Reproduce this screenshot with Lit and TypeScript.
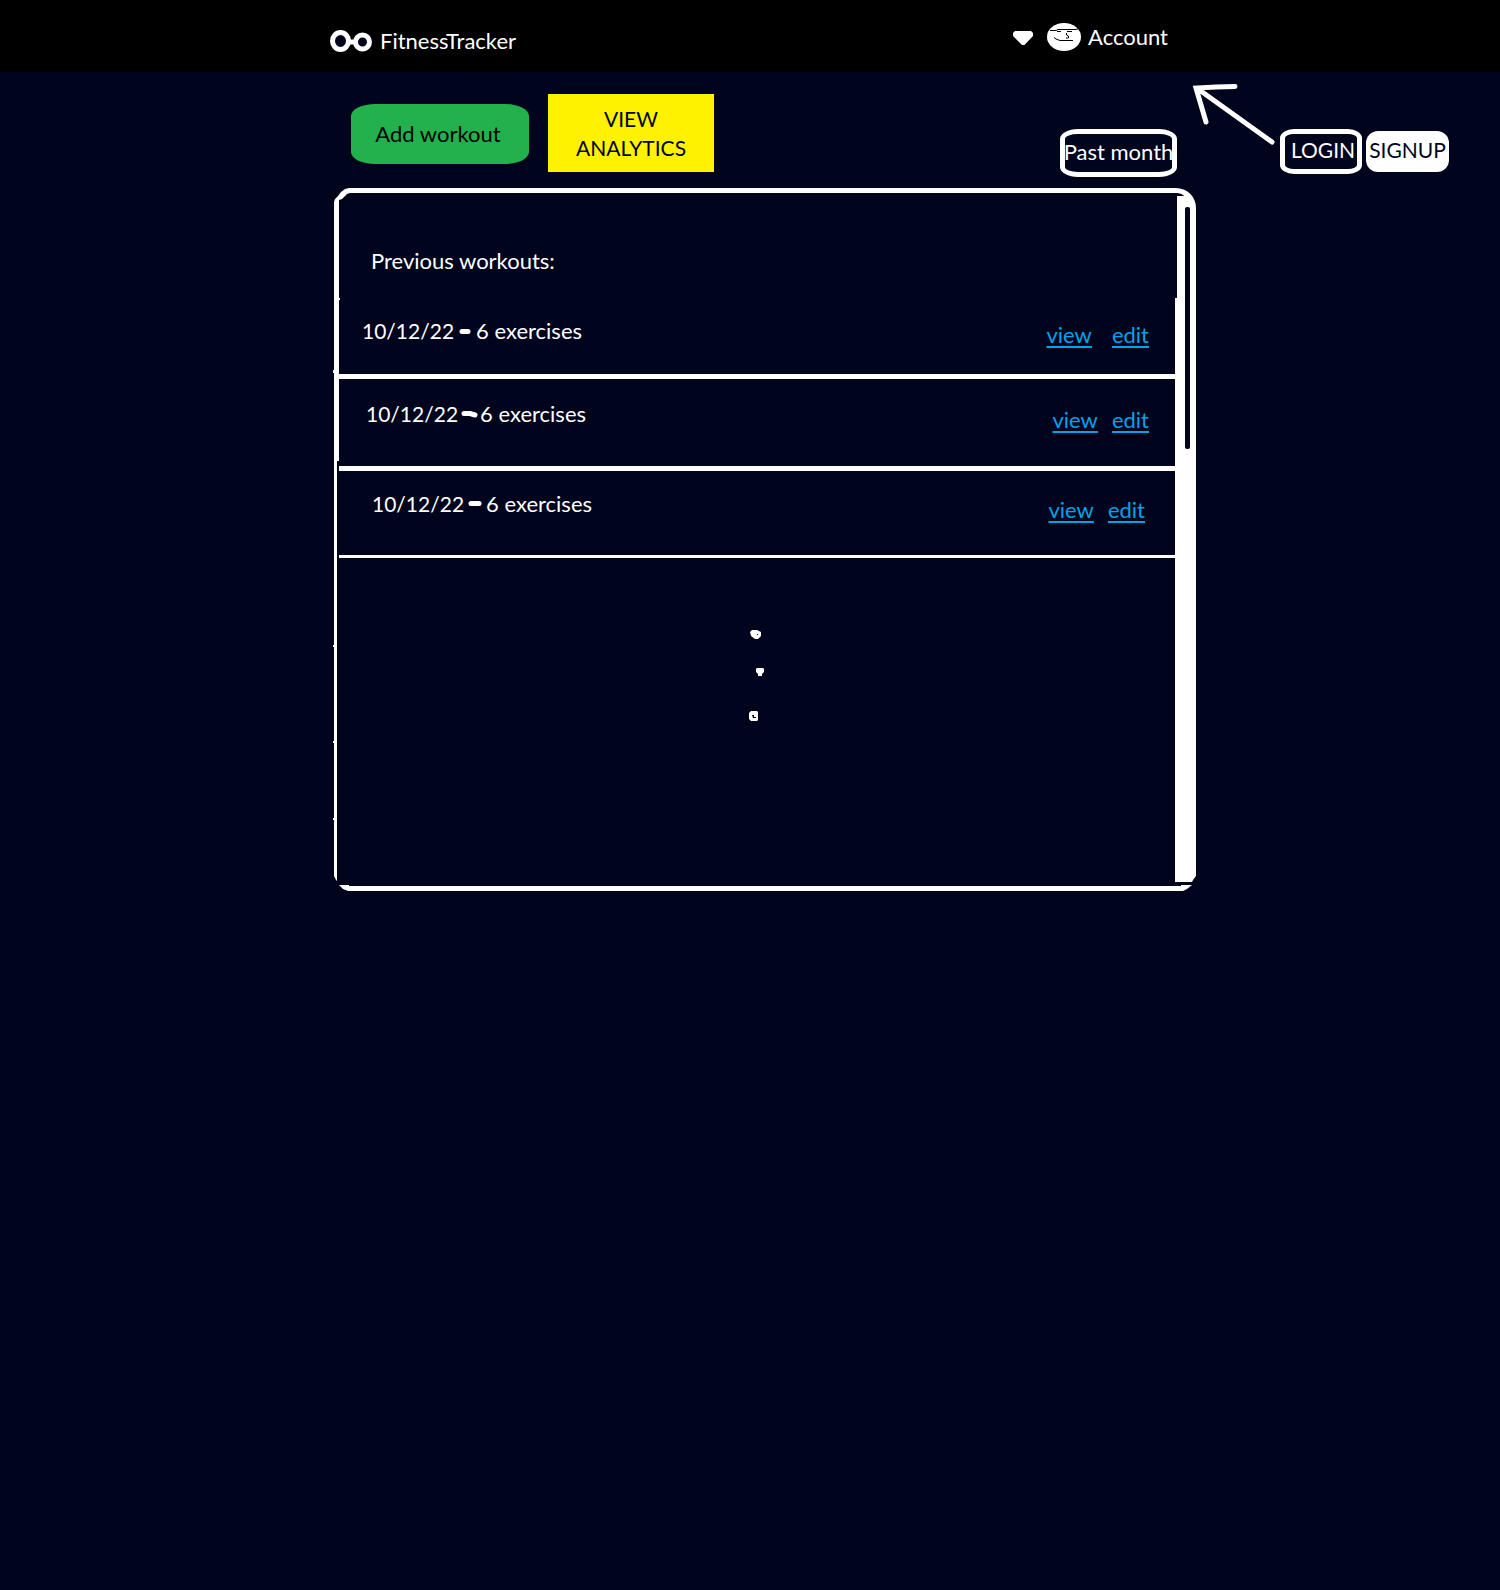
import { LitElement, html, css, svg } from "lit";
import { customElement, property } from "lit/decorators.js";

interface Workout {
  date: string;
  count: number;
  tone: string;
}

const WORKOUTS: Workout[] = [
  { date: "10/12/22", count: 6, tone: "first" },
  { date: "10/12/22", count: 6, tone: "second" },
  { date: "10/12/22", count: 6, tone: "third" },
];

const DASHES: Record<string, string> = {
  first: "M6 4.5H12",
  second: "M4 3.5H10L15 5",
  third: "M5 3.5H13",
};

@customElement("workout-row")
export class WorkoutRow extends LitElement {
  @property({ attribute: false }) workout!: Workout;

  static styles = css`
    :host {
      display: block;
    }
    .row {
      box-sizing: border-box;
      display: flex;
      justify-content: space-between;
      align-items: flex-start;
      margin-left: 2px;
      white-space: nowrap;
    }
    .first {
      height: 81px;
      padding: 18px 26px 0 23px;
      border-bottom: 5px solid #fff;
      box-shadow: -2px 0 0 #fff;
    }
    .second {
      height: 82px;
      padding: 20px 26px 0 27px;
      box-shadow: -2px 0 0 #fff;
    }
    .second-rule {
      height: 5px;
      margin: 5px 0 0 2px;
      background: #fff;
    }
    .third {
      height: 87px;
      padding: 18px 30px 0 33px;
      border-bottom: 3px solid #fff;
    }
    .summary,
    .links {
      display: flex;
    }
    .date {
      font-size: 21px;
    }
    .dash {
      width: 18px;
      height: 8px;
      margin: 11px 2px 0 2px;
      fill: none;
      stroke: #fff;
      stroke-width: 5;
      stroke-linecap: round;
    }
    .links {
      gap: 14px;
      padding-top: 6px;
    }
    .first .links {
      gap: 20px;
      padding-top: 4px;
    }
    a {
      color: #00a2e8;
      text-decoration: underline;
      text-decoration-thickness: 2px;
      text-underline-offset: 3px;
      text-decoration-skip-ink: none;
    }
  `;

  render() {
    const w = this.workout;
    return html`
      <div class="row ${w.tone}">
        <div class="summary">
          <span class="date">${w.date}</span>
          <svg class="dash" viewBox="0 0 18 8" aria-hidden="true">
            <path d=${DASHES[w.tone]}></path>
          </svg>
          <span>${w.count} exercises</span>
        </div>
        <div class="links"><a href="#view">view</a><a href="#edit">edit</a></div>
      </div>
      ${w.tone === "second" ? html`<div class="second-rule"></div>` : null}
    `;
  }
}

@customElement("app-root")
export class AppRoot extends LitElement {
  static styles = css`
    :host {
      display: block;
      min-height: 100vh;
      background: #00041d;
      color: #fff;
      font: 22px/29px Lato, Carlito, Calibri, sans-serif;
    }
    .columns {
      display: grid;
      grid-template-columns: 334fr 862fr 304fr;
    }
    .top {
      background: #000;
      height: 72px;
    }
    .bar {
      grid-column: 2;
      display: flex;
      justify-content: space-between;
      align-items: flex-start;
      white-space: nowrap;
    }
    .brand,
    .account {
      display: flex;
      align-items: center;
      color: inherit;
      text-decoration: none;
      font: inherit;
      background: none;
      border: 0;
      padding: 0;
    }
    .brand {
      margin: 26px 0 0 -4px;
      gap: 7px;
    }
    .account {
      margin: 21px 28px 0 0;
      gap: 7px;
    }
    .brand svg,
    .account svg {
      margin-top: 2px;
    }
    .account .caret {
      margin: 4px 7px 0 0;
    }
    svg {
      display: block;
      flex: none;
    }
    .tools {
      grid-column: 2;
      display: flex;
      align-items: flex-start;
      height: 116px;
      padding: 0 19px 0 17px;
    }
    button {
      box-sizing: border-box;
      font: inherit;
      white-space: nowrap;
      padding: 0;
      border: 0;
      color: inherit;
    }
    .add {
      width: 178px;
      height: 60px;
      margin-top: 32px;
      padding: 0 4px 2px 0;
      border-radius: 24px / 12px;
      background: #22b14c;
      color: #000;
    }
    .analytics,
    .login,
    .signup {
      font-size: 21px;
    }
    .analytics {
      width: 166px;
      height: 78px;
      margin: 22px auto 0 19px;
      background: #fff200;
      color: #00041d;
    }
    .analytics span {
      display: block;
    }
    .period,
    .login {
      display: flex;
      align-items: center;
      justify-content: center;
      border: 5px solid #fff;
      background: none;
    }
    .period {
      width: 117px;
      height: 48px;
      margin-top: 57px;
      padding-bottom: 3px;
      border-radius: 18px / 10px;
    }
    .auth {
      grid-column: 3;
      display: flex;
      align-items: flex-start;
      padding-top: 10px;
    }
    .arrow {
      margin-left: -4px;
    }
    .login {
      width: 82px;
      height: 45px;
      margin: 47px 4px 0 3px;
      padding: 0 0 4px 4px;
      border-radius: 14px / 9px;
    }
    .signup {
      width: 83px;
      height: 41px;
      margin-top: 49px;
      padding-bottom: 4px;
      border-radius: 12px;
      background: #fff;
      color: #00041d;
    }
    .panel {
      grid-column: 2;
      position: relative;
      box-sizing: border-box;
      min-height: 703px;
      display: flex;
      border: 5px solid #fff;
      border-left-width: 3px;
      border-right-width: 6px;
      border-radius: 20px;
    }
    .body {
      flex: 1;
    }
    h1 {
      position: relative;
      margin: 0 -2px 0 2px;
      height: 105px;
      box-sizing: border-box;
      padding: 53px 0 0 32px;
      font: inherit;
      background: #00041d;
      box-shadow: -2px 0 0 #fff;
    }
    .more {
      margin: 70px auto 0;
      padding-left: 2px;
      fill: #fff;
    }
    .track {
      width: 15px;
      margin: 3px 0 4px;
      background: #fff;
      box-sizing: border-box;
      padding: 11px 0 0 10px;
    }
    .thumb {
      width: 5px;
      height: 242px;
      border-radius: 2px;
      background: #00041d;
    }
    .corner {
      position: absolute;
      fill: #fff;
    }
    .corner .ground {
      fill: #00041d;
    }
    .left {
      left: -3px;
      bottom: -5px;
    }
    .right {
      right: -6px;
      bottom: -5px;
    }
    .start {
      left: -3px;
      top: -5px;
    }
    .specks {
      position: absolute;
      left: -4px;
      top: 0;
      fill: #fff;
    }
  `;

  render() {
    return html`
      <header class="top columns">
        <nav class="bar">
          <a class="brand" href="#home">
            <svg width="43" height="23" viewBox="0 0 43 23" aria-hidden="true">
              <g fill="#00041d" stroke="#fff" stroke-width="5">
                <path d="M18 12H27"></path>
                <ellipse cx="10.500" cy="11" rx="8" ry="8.500"></ellipse>
                <ellipse cx="32.500" cy="12" rx="7" ry="7"></ellipse>
              </g>
            </svg>
            <span>FitnessTracker</span>
          </a>
          <button class="account" type="button">
            <svg class="caret" width="20" height="15" viewBox="0 0 20 15" aria-hidden="true">
              <path fill="#fff" d="M2 0H18L20 2V5L11.500 14H9L0 5V2Z"></path>
            </svg>
            <svg width="34" height="28" viewBox="0 0 34 28" aria-hidden="true">
              <ellipse cx="17" cy="14" rx="17" ry="14" fill="#fff"></ellipse>
              <g fill="none" stroke="#000">
                <path d="M3 7.500H9L11 6.500H28L31 6"></path>
                <path d="M10 8.500H14M20 8.500H25"></path>
                <path d="M19.500 10V12L21.500 13V15H19M7 14.500L9 16L13 17.500H26"></path>
              </g>
            </svg>
            <span>Account</span>
          </button>
        </nav>
      </header>
      <main class="columns">
        <div class="tools">
          <button class="add" type="button">Add workout</button>
          <button class="analytics" type="button"><span>VIEW</span><span>ANALYTICS</span></button>
          <button class="period" type="button">Past month</button>
        </div>
        <div class="auth">
          <svg class="arrow" width="85" height="64" viewBox="0 0 85 64" aria-hidden="true">
            <path
              d="M43 4.500L24 5L4 6L14 40M6 7L80 60"
              fill="none"
              stroke="#fff"
              stroke-width="5"
              stroke-linecap="round"
            ></path>
          </svg>
          <button class="login" type="button">LOGIN</button>
          <button class="signup" type="button">SIGNUP</button>
        </div>
        <section class="panel">
          <div class="body">
            <h1>Previous workouts:</h1>
            ${WORKOUTS.map((w) => html`<workout-row .workout=${w}></workout-row>`)}
            <svg class="more" width="16" height="94" viewBox="0 0 16 94" aria-hidden="true">
              <path d="M3 2H8L12 4V8L9 11H6L2 8L1 4Z"></path>
              <path d="M8 40H14L15 41V44L13 46V48H9V46L7 44V41Z"></path>
              <path d="M2 83H8L9 84V92L8 93H2L0 91V85Z"></path>
              <path fill="#00041d" d="M8 6h1v1h-1zM3 87h2v2h2v1h-3z"></path>
            </svg>
          </div>
          <div class="track"><div class="thumb"></div></div>
          ${this.corner("start", "M0 20V14L1 11L4 8L7 4L11 1L15 0H20V5H16L13 6L8 11L5 12V20Z")}
          ${this.corner("left", "M0 0H3V10L2 9L0 5ZM5 14H15V15H20V20H14L9 18Z")}
          ${this.corner("right", "M0 0H20V5L17 9L16 11H0ZM0 15H5V14H16L11 18L7 20H0Z")}
          <svg class="specks" width="8" height="640" viewBox="0 0 8 640" aria-hidden="true">
            <path d="M0 177h2v3h-2zM5 105h2v2h-2zM0 452h2v2h-2zM0 548h2v2h-2zM0 625h2v2h-2z"></path>
          </svg>
        </section>
      </main>
    `;
  }

  private corner(side: string, shape: string) {
    return html`<svg class="corner ${side}" width="20" height="20" viewBox="0 0 20 20" aria-hidden="true">
      ${svg`<path class="ground" d="M0 0H20V20H0Z"></path><path d=${shape}></path>`}
    </svg>`;
  }
}
